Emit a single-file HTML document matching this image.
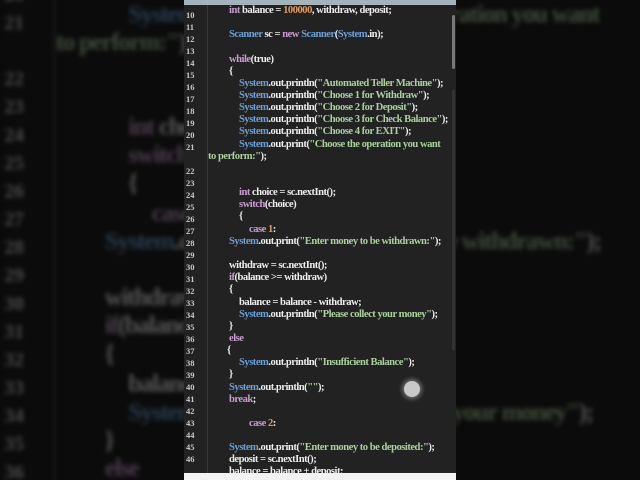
<!DOCTYPE html>
<html><head><meta charset="utf-8"><style>
html,body{margin:0;padding:0;width:640px;height:480px;overflow:hidden;background:#0b0b0b}
#root{position:relative;width:640px;height:480px;overflow:hidden;background:#0b0b0b}
.p{position:absolute;left:0;top:0;width:640px;height:480px}
.bg{transform-origin:0 0;transform:matrix(2.34,0,0,2.34,-431,-322);opacity:.32;filter:blur(1px)}
.frame{position:absolute;left:184px;top:0;width:272px;height:480px;background:#222223}
.bg .frame{background:#0b0b0b}
.div{position:absolute;left:207px;top:0;width:1px;height:480px;background:#3a3a3a}
.r{position:absolute;white-space:pre;font:bold 10.6px/12px "Liberation Serif",serif;letter-spacing:-0.5px;color:#ececec}
.n{position:absolute;left:186px;width:16px;font:bold 8.5px/12px "Liberation Serif",serif;color:#c8c8c8}
.k{color:#c99bcf}.s{color:#6b9fd6}.g{color:#a9cf9c}.o{color:#e39a5c}
</style></head><body><div id="root">
<div class="p bg">
<div class="frame"></div><div class="div"></div>
<div class="r" style="left:229px;top:5px"><span class="k">int</span> balance = <span class="o">100000</span>, withdraw, deposit;</div>
<div class="r" style="left:229px;top:29px"><span class="s">Scanner</span> sc = <span class="k">new</span> <span class="s">Scanner</span>(<span class="s">System</span>.in);</div>
<div class="r" style="left:229px;top:54px"><span class="k">while</span>(true)</div>
<div class="r" style="left:229px;top:66px">{</div>
<div class="r" style="left:239px;top:78px"><span class="s">System</span>.out.println(<span class="g">"Automated Teller Machine"</span>);</div>
<div class="r" style="left:239px;top:90px"><span class="s">System</span>.out.println(<span class="g">"Choose 1 for Withdraw"</span>);</div>
<div class="r" style="left:239px;top:102px"><span class="s">System</span>.out.println(<span class="g">"Choose 2 for Deposit"</span>);</div>
<div class="r" style="left:239px;top:114px"><span class="s">System</span>.out.println(<span class="g">"Choose 3 for Check Balance"</span>);</div>
<div class="r" style="left:239px;top:126px"><span class="s">System</span>.out.println(<span class="g">"Choose 4 for EXIT"</span>);</div>
<div class="r" style="left:239px;top:139px"><span class="s">System</span>.out.print(<span class="g">"Choose the operation you want</span></div>
<div class="r" style="left:208px;top:151px"><span class="g">to perform:"</span>);</div>
<div class="r" style="left:239px;top:187px"><span class="k">int</span> choice = sc.nextInt();</div>
<div class="r" style="left:239px;top:199px"><span class="k">switch</span>(choice)</div>
<div class="r" style="left:239px;top:211px">{</div>
<div class="r" style="left:249px;top:224px"><span class="k">case</span> <span class="o">1</span>:</div>
<div class="r" style="left:229px;top:236px"><span class="s">System</span>.out.print(<span class="g">"Enter money to be withdrawn:"</span>);</div>
<div class="r" style="left:229px;top:260px">withdraw = sc.nextInt();</div>
<div class="r" style="left:229px;top:272px"><span class="k">if</span>(balance &gt;= withdraw)</div>
<div class="r" style="left:229px;top:284px">{</div>
<div class="r" style="left:239px;top:297px">balance = balance - withdraw;</div>
<div class="r" style="left:239px;top:309px"><span class="s">System</span>.out.println(<span class="g">"Please collect your money"</span>);</div>
<div class="r" style="left:229px;top:321px">}</div>
<div class="r" style="left:229px;top:333px"><span class="k">else</span></div>
<div class="r" style="left:227px;top:345px">{</div>
<div class="r" style="left:239px;top:357px"><span class="s">System</span>.out.println(<span class="g">"Insufficient Balance"</span>);</div>
<div class="r" style="left:229px;top:369px">}</div>
<div class="r" style="left:229px;top:382px"><span class="s">System</span>.out.println(<span class="g">""</span>);</div>
<div class="r" style="left:229px;top:394px"><span class="k">break</span>;</div>
<div class="n" style="top:9px">10<br>11<br>12<br>13<br>14<br>15<br>16<br>17<br>18<br>19<br>20<br>21<br><br>22<br>23<br>24<br>25<br>26<br>27<br>28<br>29<br>30<br>31<br>32<br>33<br>34<br>35<br>36<br>37<br>38<br>39<br>40<br>41<br>42</div>
</div>

<div class="p">
<div class="frame"></div><div class="div"></div>
<div style="position:absolute;left:184px;top:0;width:272px;height:5px;background:#a3b3bb"></div>
<div style="position:absolute;left:452px;top:15px;width:3px;height:54px;background:#777;border-radius:2px"></div>
<div style="position:absolute;left:452px;top:90px;width:3px;height:260px;background:#333"></div>
<div class="r" style="left:229px;top:5px"><span class="k">int</span> balance = <span class="o">100000</span>, withdraw, deposit;</div>
<div class="r" style="left:229px;top:29px"><span class="s">Scanner</span> sc = <span class="k">new</span> <span class="s">Scanner</span>(<span class="s">System</span>.in);</div>
<div class="r" style="left:229px;top:54px"><span class="k">while</span>(true)</div>
<div class="r" style="left:229px;top:66px">{</div>
<div class="r" style="left:239px;top:78px"><span class="s">System</span>.out.println(<span class="g">"Automated Teller Machine"</span>);</div>
<div class="r" style="left:239px;top:90px"><span class="s">System</span>.out.println(<span class="g">"Choose 1 for Withdraw"</span>);</div>
<div class="r" style="left:239px;top:102px"><span class="s">System</span>.out.println(<span class="g">"Choose 2 for Deposit"</span>);</div>
<div class="r" style="left:239px;top:114px"><span class="s">System</span>.out.println(<span class="g">"Choose 3 for Check Balance"</span>);</div>
<div class="r" style="left:239px;top:126px"><span class="s">System</span>.out.println(<span class="g">"Choose 4 for EXIT"</span>);</div>
<div class="r" style="left:239px;top:139px"><span class="s">System</span>.out.print(<span class="g">"Choose the operation you want</span></div>
<div class="r" style="left:208px;top:151px"><span class="g">to perform:"</span>);</div>
<div class="r" style="left:239px;top:187px"><span class="k">int</span> choice = sc.nextInt();</div>
<div class="r" style="left:239px;top:199px"><span class="k">switch</span>(choice)</div>
<div class="r" style="left:239px;top:211px">{</div>
<div class="r" style="left:249px;top:224px"><span class="k">case</span> <span class="o">1</span>:</div>
<div class="r" style="left:229px;top:236px"><span class="s">System</span>.out.print(<span class="g">"Enter money to be withdrawn:"</span>);</div>
<div class="r" style="left:229px;top:260px">withdraw = sc.nextInt();</div>
<div class="r" style="left:229px;top:272px"><span class="k">if</span>(balance &gt;= withdraw)</div>
<div class="r" style="left:229px;top:284px">{</div>
<div class="r" style="left:239px;top:297px">balance = balance - withdraw;</div>
<div class="r" style="left:239px;top:309px"><span class="s">System</span>.out.println(<span class="g">"Please collect your money"</span>);</div>
<div class="r" style="left:229px;top:321px">}</div>
<div class="r" style="left:229px;top:333px"><span class="k">else</span></div>
<div class="r" style="left:227px;top:345px">{</div>
<div class="r" style="left:239px;top:357px"><span class="s">System</span>.out.println(<span class="g">"Insufficient Balance"</span>);</div>
<div class="r" style="left:229px;top:369px">}</div>
<div class="r" style="left:229px;top:382px"><span class="s">System</span>.out.println(<span class="g">""</span>);</div>
<div class="r" style="left:229px;top:394px"><span class="k">break</span>;</div>
<div class="r" style="left:249px;top:418px"><span class="k">case</span> <span class="o">2</span>:</div>
<div class="r" style="left:229px;top:442px"><span class="s">System</span>.out.print(<span class="g">"Enter money to be deposited:"</span>);</div>
<div class="r" style="left:229px;top:454px">deposit = sc.nextInt();</div>
<div class="r" style="left:229px;top:466px">balance = balance + deposit;</div>
<div class="n" style="top:9px">10<br>11<br>12<br>13<br>14<br>15<br>16<br>17<br>18<br>19<br>20<br>21<br><br>22<br>23<br>24<br>25<br>26<br>27<br>28<br>29<br>30<br>31<br>32<br>33<br>34<br>35<br>36<br>37<br>38<br>39<br>40<br>41<br>42<br>43<br>44<br>45<br>46</div>
<div style="position:absolute;left:184px;top:473px;width:272px;height:7px;background:#f2f2f2"></div>
<div style="position:absolute;left:404px;top:381px;width:16px;height:16px;border-radius:50%;background:#c9c9c9;box-shadow:0 0 4px 2px rgba(255,255,255,.35)"></div>
</div>
</div></body></html>
